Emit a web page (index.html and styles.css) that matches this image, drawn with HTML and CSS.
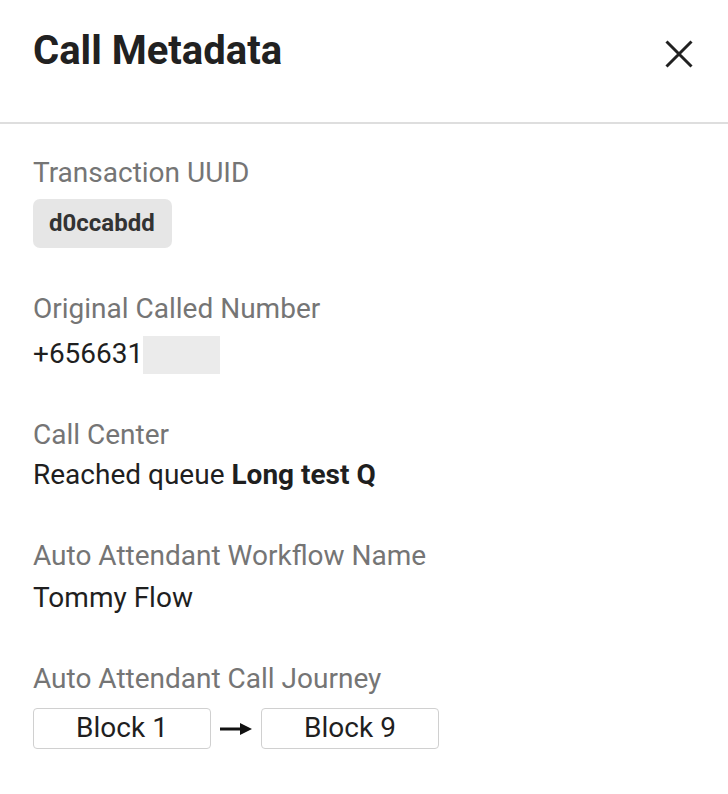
FILE: index.html
```html
<!DOCTYPE html>
<html>
<head>
<meta charset="utf-8">
<link rel="stylesheet" href="styles.css">
</head>
<body>
<div class="panel">
  <header class="header">
    <h1 class="title">Call Metadata</h1>
    <button class="close" aria-label="Close">
      <svg width="28" height="28" viewBox="0 0 28 28"><path d="M1.5 1.5 L26.5 26.5 M26.5 1.5 L1.5 26.5" stroke="#212121" stroke-width="3" fill="none"/></svg>
    </button>
  </header>
  <div class="content">
    <section class="field">
      <div class="label">Transaction UUID</div>
      <div class="chip">d0ccabdd</div>
    </section>
    <section class="field">
      <div class="label">Original Called Number</div>
      <div class="value value-redacted"><span>+656631</span><span class="redact"></span></div>
    </section>
    <section class="field">
      <div class="label">Call Center</div>
      <div class="value">Reached queue <b>Long test Q</b></div>
    </section>
    <section class="field">
      <div class="label">Auto Attendant Workflow Name</div>
      <div class="value value-gap">Tommy Flow</div>
    </section>
    <section class="field">
      <div class="label">Auto Attendant Call Journey</div>
      <div class="journey">
        <div class="block">Block 1</div>
        <svg class="arrow" width="32" height="16" viewBox="0 0 32 16"><path d="M0 8 H22" stroke="#111" stroke-width="3"/><path d="M20 2 L32 8 L20 14 Z" fill="#111"/></svg>
        <div class="block">Block 9</div>
      </div>
    </section>
  </div>
</div>
</body>
</html>
```
FILE: styles.css
```css
html, body {
  margin: 0;
  padding: 0;
  background: #fff;
  font-family: Roboto, "Noto Sans", sans-serif;
  color: #1f1f1f;
}
.panel {
  width: 728px;
}
.header {
  height: 124px;
  border-bottom: 2px solid #dedede;
  display: flex;
  align-items: flex-start;
  justify-content: space-between;
  padding: 27px 35px 0 33px;
  box-sizing: border-box;
}
.title {
  margin: 0;
  font-size: 40px;
  line-height: 48px;
  font-weight: 700;
  color: #212121;
}
.close {
  border: 0;
  background: none;
  padding: 0;
  margin: 13px 0 0 0;
  width: 28px;
  height: 28px;
  display: flex;
}
.content {
  padding: 29px 33px 0;
  display: flex;
  flex-direction: column;
  gap: 41px;
}
.field {
  display: flex;
  flex-direction: column;
}
.label {
  font-size: 28px;
  line-height: 40px;
  color: #757575;
}
.value {
  font-size: 28px;
  line-height: 40px;
  color: #1f1f1f;
}
.value b {
  font-weight: 700;
}
.value-gap {
  margin-top: 2px;
}
.value-redacted {
  display: flex;
  align-items: flex-end;
  margin-top: 5px;
}
.redact {
  display: block;
  width: 77px;
  height: 38px;
  background: #ebebeb;
}
.chip {
  align-self: flex-start;
  margin-top: 6px;
  background: #e6e6e6;
  border-radius: 7px;
  height: 49px;
  line-height: 49px;
  padding: 0 17px 0 16px;
  font-size: 24px;
  font-weight: 700;
  color: #333;
}
.journey {
  display: flex;
  align-items: center;
  margin-top: 9px;
  gap: 9px;
}
.block {
  width: 178px;
  height: 41px;
  box-sizing: border-box;
  border: 1.5px solid #d0d0d0;
  border-radius: 4px;
  font-size: 28px;
  line-height: 38px;
  text-align: center;
  color: #1f1f1f;
}
```
